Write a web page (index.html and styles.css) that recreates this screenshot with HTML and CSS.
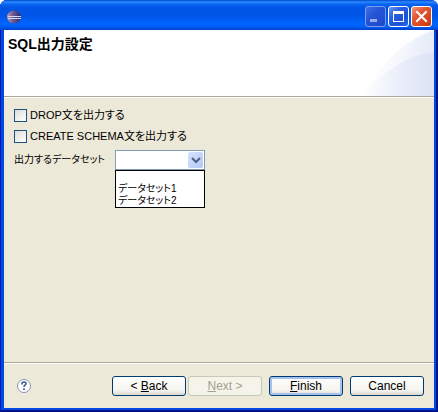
FILE: index.html
```html
<!DOCTYPE html>
<html lang="ja">
<head>
<meta charset="utf-8">
<meta name="viewport" content="width=device-width, initial-scale=1">
<title>SQL出力設定</title>
<link rel="stylesheet" href="styles.css">
</head>
<body>
<div class="window">
  <header class="titlebar">
    <svg class="app-icon" viewBox="0 0 16 16" aria-hidden="true">
      <defs>
        <linearGradient id="globe" x1="0" x2="1" y1="0" y2="0">
          <stop offset="0" stop-color="#c795a0"/>
          <stop offset=".4" stop-color="#6a609a"/>
          <stop offset="1" stop-color="#2c2866"/>
        </linearGradient>
      </defs>
      <ellipse cx="8" cy="8" rx="7" ry="6.500" fill="url(#globe)"/>
      <path d="M2 7h13v1H2zM2 9h13v1H2z" fill="#d4d6f6"/>
    </svg>
    <div class="window-controls">
      <button class="control minimize" type="button" aria-label="Minimize" disabled>
        <svg viewBox="0 0 21 21"><path d="M5 13h7v3H5z" fill="#98a9ef"/></svg>
      </button>
      <button class="control maximize" type="button" aria-label="Maximize">
        <svg viewBox="0 0 21 21"><path fill="#fff" fill-rule="evenodd" d="M5 5h11v11H5zM6 8v7h9V8z"/></svg>
      </button>
      <button class="control close" type="button" aria-label="Close">
        <svg viewBox="0 0 21 21"><path d="M6 6l9 9M15 6l-9 9" stroke="#fff" stroke-width="2" stroke-linecap="square"/></svg>
      </button>
    </div>
  </header>

  <div class="dialog">
    <section class="banner">
      <h1>SQL出力設定</h1>
      <svg class="banner-art" viewBox="0 0 72 66" aria-hidden="true">
        <defs>
          <linearGradient id="outer" x1="0" x2="1" y1="0" y2="0">
            <stop offset="0" stop-color="#fff"/>
            <stop offset=".5" stop-color="#f6f8fd"/>
            <stop offset="1" stop-color="#eaeffa"/>
          </linearGradient>
          <linearGradient id="inner" x1="0" x2="1" y1="0" y2="0">
            <stop offset="0" stop-color="#fafbfe"/>
            <stop offset="1" stop-color="#e4eaf8"/>
          </linearGradient>
          <linearGradient id="lower" x1="0" x2="1" y1="0" y2="0">
            <stop offset="0" stop-color="#fff"/>
            <stop offset=".5" stop-color="#ebeffa"/>
            <stop offset="1" stop-color="#dce3f5"/>
          </linearGradient>
        </defs>
        <path d="M0 66Q34 10 72 0V66z" fill="url(#outer)"/>
        <path d="M26 66Q38 12 72 1V66z" fill="url(#inner)"/>
        <path d="M0 66Q36 25 72 22V66z" fill="url(#lower)"/>
      </svg>
    </section>

    <main class="options">
      <label class="check"><input type="checkbox">DROP文を出力する</label>
      <label class="check"><input type="checkbox">CREATE SCHEMA文を出力する</label>
      <div class="field">
        <label for="dataset">出力するデータセット</label>
        <div class="combo">
          <select id="dataset">
            <option></option>
            <option>データセット1</option>
            <option>データセット2</option>
          </select>
          <span class="arrow" aria-hidden="true">
            <svg viewBox="0 0 15 16"><path d="M4 6l4 4 4-4" fill="none" stroke="#4d6185" stroke-width="2"/></svg>
          </span>
          <ul class="dropdown">
            <li></li>
            <li>データセット1</li>
            <li>データセット2</li>
          </ul>
        </div>
      </div>
    </main>

    <footer class="actions">
      <button class="help" type="button" aria-label="Help">
        <svg viewBox="0 0 16 16">
          <circle cx="8" cy="8" r="6.500" fill="#fff" stroke="#8495b5"/>
          <path d="M6 6.500V5.500Q6 4 8 4t2 1.500Q10 6.500 9 7.200T8 9" fill="none" stroke="#405e8d" stroke-width="1.600"/>
          <path d="M7 10.500h2v1.600H7z" fill="#405e8d"/>
        </svg>
      </button>
      <div class="nav">
        <button class="push" type="button">&lt; <u>B</u>ack</button>
        <button class="push" type="button" disabled><u>N</u>ext &gt;</button>
      </div>
      <button class="push default" type="button"><u>F</u>inish</button>
      <button class="push" type="button">Cancel</button>
    </footer>
  </div>
</div>
</body>
</html>
```
FILE: styles.css
```css
* {
  box-sizing: border-box;
}

body {
  margin: 0;
  background: #fff;
  color: #000;
  font: 11px/14px "Liberation Sans", "Noto Sans CJK JP", sans-serif;
  font-feature-settings: "palt";
}

button,
select {
  margin: 0;
  padding: 0;
  font: inherit;
  color: inherit;
}

svg {
  display: block;
}

.window {
  display: flex;
  flex-direction: column;
  min-height: 100vh;
  padding: 0 4px 4px;
  border-radius: 7px 7px 0 0;
  background: #0048e0;
  box-shadow: inset 1px 0 #0019b0, inset -2px -2px #00138c;
}

.titlebar {
  display: flex;
  align-items: center;
  justify-content: space-between;
  height: 30px;
  margin: 0 -4px;
  padding: 3px 6px 0;
  border-radius: 7px 7px 0 0;
  background: linear-gradient(#0046d0 0, #2a8cff 2px, #0a66f2 4px, #0054e3 8px, #0055e8 16px, #0066ff 24px, #005cf5 27px, #003fc8 30px);
}

.app-icon {
  width: 16px;
  height: 16px;
}

.window-controls {
  display: flex;
  gap: 2px;
}

.control {
  width: 21px;
  height: 21px;
  border: 1px solid #fff;
  border-radius: 3px;
  background: linear-gradient(135deg, #6b94f5, #2a5fe0 35%, #1c50d4 70%, #2c6cf2);
}

.control svg {
  width: 21px;
  height: 21px;
  margin: -1px;
}

.minimize {
  border-color: #7a9cf0;
  background: linear-gradient(135deg, #4470e4, #2455d6 40%, #1d49c8);
}

.close {
  background: linear-gradient(135deg, #f0957c, #e25a35 35%, #d4431c 75%, #c43a14);
}

.dialog {
  flex: 1;
  display: flex;
  flex-direction: column;
  background: #ece9d8;
}

.banner {
  display: flex;
  justify-content: space-between;
  height: 68px;
  border-bottom: 1px solid #fff;
  background: linear-gradient(#aca899, #aca899) bottom / 100% 1px no-repeat #fff;
}

.banner h1 {
  margin: 6px 0 0 4px;
  font-size: 14px;
  line-height: 16px;
  font-weight: bold;
  font-feature-settings: normal;
}

.banner-art {
  width: 72px;
  height: 66px;
}

.options {
  flex: 1;
  display: flex;
  flex-direction: column;
  align-items: flex-start;
  gap: 7px;
  padding: 10px;
}

.check {
  display: flex;
  align-items: center;
  gap: 3px;
}

.check input {
  appearance: none;
  width: 13px;
  height: 13px;
  margin: 0;
  border: 1px solid #1c5180;
  background: linear-gradient(135deg, #dcdcd7, #fff);
}

.check input:checked {
  background: #21a121;
}

.field {
  display: flex;
  align-items: center;
  gap: 5px;
}

.field label {
  width: 96px;
  font-size: 10px;
  white-space: nowrap;
}

.combo {
  position: relative;
  width: 90px;
}

.combo select {
  display: block;
  appearance: none;
  width: 100%;
  height: 20px;
  padding: 0 18px 0 3px;
  border: 1px solid #7f9db9;
  border-radius: 0;
  background: #fff;
}

.arrow {
  position: absolute;
  top: 2px;
  right: 2px;
  width: 15px;
  height: 16px;
  border-radius: 2px;
  background: linear-gradient(135deg, #d6e2ff, #b4c8f6);
  pointer-events: none;
}

.dropdown {
  position: absolute;
  top: 100%;
  left: 0;
  right: 0;
  margin: 0;
  padding: 0 2px;
  border: 1px solid #000;
  background: #fff;
  font-size: 10px;
  list-style: none;
}

.dropdown li {
  height: 12px;
  line-height: 12px;
  white-space: nowrap;
}

.actions {
  display: flex;
  align-items: center;
  gap: 7px;
  height: 46px;
  padding: 0 10px 0 12px;
  border-top: 1px solid #aca899;
  box-shadow: inset 0 1px #fff;
}

.help {
  width: 16px;
  height: 16px;
  margin-right: auto;
  border: 0;
  background: none;
}

.nav {
  display: flex;
  gap: 2px;
}

.push {
  width: 74px;
  height: 20px;
  border: 1px solid #003c74;
  border-radius: 3px;
  background: linear-gradient(#fff, #f4f3ee 75%, #dcd8cc);
  font-size: 12px;
}

.push:disabled {
  border-color: #c9c7ba;
  background: #f5f4ea;
  color: #a1a192;
}

.default {
  box-shadow: inset 0 0 0 2px #a6c0f0;
}
```
